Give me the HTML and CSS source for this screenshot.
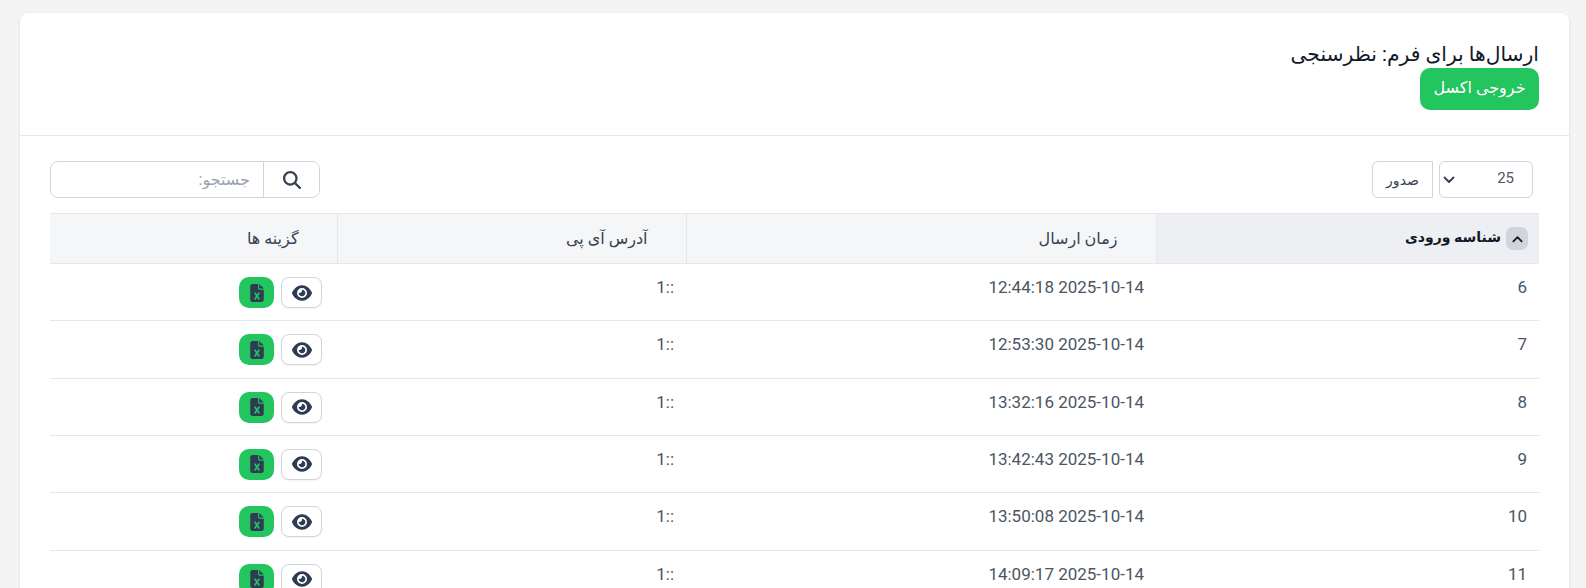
FILE: index.html
```html
<!DOCTYPE html>
<html lang="fa" dir="rtl">
<head>
<meta charset="utf-8">
<title>ارسال‌ها برای فرم: نظرسنجی</title>
<link rel="stylesheet" href="styles.css">
</head>
<body>
<main class="card">
  <header class="card-head">
    <h1 class="title">ارسال‌ها برای فرم: نظرسنجی</h1>
    <a class="btn-export">خروجی اکسل</a>
  </header>
  <section class="card-body">
    <div class="toolbar">
      <div class="tools">
        <div class="select"><span>25</span><svg class="chev" viewBox="0 0 12 8"><path d="M1.5 1.5 6 6l4.5-4.5" fill="none" stroke="#374151" stroke-width="1.9" stroke-linecap="round" stroke-linejoin="round"/></svg></div>
        <button class="btn-out">صدور</button>
      </div>
      <div class="search">
        <button class="search-btn"><svg class="search-ic" viewBox="0 0 512 512"><path fill="#374151" d="M416 208c0 45.9-14.9 88.3-40 122.7L502.6 457.4c12.5 12.5 12.5 32.8 0 45.3s-32.8 12.5-45.3 0L330.7 376c-34.4 25.2-76.8 40-122.7 40C93.1 416 0 322.9 0 208S93.1 0 208 0S416 93.1 416 208zM208 352a144 144 0 1 0 0-288 144 144 0 1 0 0 288z"/></svg></button>
        <input class="search-input" placeholder="جستجو:">
      </div>
    </div>
    <table class="grid">
      <colgroup><col class="c1"><col class="c2"><col class="c3"><col class="c4"></colgroup>
      <thead>
        <tr>
          <th class="sorted"><span class="sort"><svg viewBox="0 0 12 8"><path d="M1.5 6.5 6 2l4.5 4.5" fill="none" stroke="#111827" stroke-width="2" stroke-linecap="round" stroke-linejoin="round"/></svg></span>شناسه ورودی</th>
          <th>زمان ارسال</th>
          <th>آدرس آی پی</th>
          <th>گزینه ها</th>
        </tr>
      </thead>
      <tbody id="rows"></tbody>
    </table>
  </section>
</main>
<svg class="defs" aria-hidden="true">
  <symbol id="eye" viewBox="0 0 576 512"><path d="M288 32c-80.8 0-145.5 36.8-192.6 80.6C48.6 156 17.3 208 2.5 243.7c-3.3 7.9-3.3 16.7 0 24.6C17.3 304 48.6 356 95.4 399.4C142.5 443.2 207.2 480 288 480s145.5-36.8 192.6-80.6c46.8-43.5 78.1-95.4 93-131.1c3.3-7.9 3.3-16.7 0-24.6c-14.9-35.7-46.2-87.7-93-131.1C433.5 68.8 368.8 32 288 32zM144 256a144 144 0 1 1 288 0 144 144 0 1 1 -288 0zm144-64c0 35.3-28.7 64-64 64c-7.1 0-13.9-1.2-20.3-3.3c-5.5-1.8-11.9 1.6-11.7 7.4c.3 6.9 1.3 13.8 3.2 20.7c13.7 51.2 66.4 81.6 117.6 67.9s81.6-66.4 67.9-117.6c-11.1-41.5-47.8-69.4-88.6-71.1c-5.8-.2-9.2 6.1-7.4 11.7c2.1 6.4 3.3 13.2 3.3 20.3z"/></symbol>
  <symbol id="xls" viewBox="0 0 384 512"><path d="M64 0C28.7 0 0 28.7 0 64V448c0 35.3 28.7 64 64 64H320c35.3 0 64-28.7 64-64V160H256c-17.7 0-32-14.3-32-32V0H64zM256 0V128H384L256 0zM155.7 250.2L192 302.1l36.3-51.9c7.6-10.9 22.6-13.5 33.4-5.9s13.5 22.6 5.9 33.4L221.3 344l46.4 66.2c7.6 10.9 5 25.8-5.9 33.4s-25.8 5-33.4-5.9L192 385.8l-36.3 51.9c-7.6 10.9-22.6 13.5-33.4 5.9s-13.5-22.6-5.9-33.4L162.7 344l-46.4-66.2c-7.6-10.9-5-25.8 5.9-33.4s25.8-5 33.4 5.9z"/></symbol>
</svg>
<script src="app.js"></script>
</body>
</html>
```
FILE: styles.css
```css
* { box-sizing: border-box; }
html, body { margin: 0; height: 100%; overflow: hidden; }
body {
  background: #f4f4f4;
  padding: 13px 17px 0 20px;
  font-family: Roboto, "DejaVu Sans", sans-serif;
  color: #374151;
  font-size: 17px;
}
.defs { display: none; }
.card {
  background: #fff;
  border-radius: 8px;
  box-shadow: 0 1px 3px rgba(0,0,0,.12);
  width: 1549px;
}
.card-head {
  height: 123px;
  padding: 28px 30px 0;
  border-bottom: 1px solid #e5e7eb;
}
.title { margin: 0; font-size: 20.3px; font-weight: 400; line-height: 27px; color: #111827; }
.btn-export {
  display: inline-flex; align-items: center; justify-content: center;
  width: 119px; height: 42px;
  background: #22c55e; color: #fff;
  border-radius: 10px; font-size: 16px;
  padding-bottom: 3px;
}
.card-body { padding: 25px 30px 0; }
.toolbar { display: flex; justify-content: space-between; align-items: center; padding-right: 6px; }
.tools { display: flex; gap: 6px; }
.select {
  width: 94px; height: 37px;
  border: 1px solid #d1d5db; border-radius: 6px;
  display: flex; align-items: center; justify-content: space-between;
  padding: 0 18px 3px 3px; font-size: 15px; color: #4b5563;
}
.chev { width: 12px; height: 8px; margin-top: 3px; }
.btn-out {
  width: 61px; height: 37px; padding: 0;
  background: #fff; border: 1px solid #d1d5db;
  border-radius: 6px 0 0 6px;
  font: inherit; font-size: 14px; color: #374151;
}
.search {
  width: 270px; height: 37px;
  border: 1px solid #d1d5db; border-radius: 8px;
  display: flex; overflow: hidden;
}
.search-input {
  flex: 1; min-width: 0; border: 0; outline: 0; padding: 0 13px;
  font: inherit; font-size: 16px; background: transparent; direction: rtl;
}
.search-input::placeholder { color: #9ca3af; opacity: 1; }
.search-btn {
  width: 56px; border: 0; border-left: 1px solid #d1d5db; background: #fff; padding: 0;
  display: flex; align-items: center; justify-content: center;
}
.search-ic { width: 18px; height: 18px; }
.grid { margin-top: 15px; width: 1489px; border-collapse: collapse; table-layout: fixed; }
.c1 { width: 383px; } .c2 { width: 470px; } .c3 { width: 349px; } .c4 { width: 287px; }
.grid th {
  height: 50px; padding: 0 38px 0 12px; text-align: right;
  background: #f5f6f8; font-weight: 400; font-size: 16px; color: #374151;
  border-top: 1px solid #e5e7eb; border-bottom: 1px solid #e5e7eb; border-left: 1px solid #e5e7eb;
}
.grid th:last-child { border-left: 0; }
.grid th.sorted { background: #eeeff2; font-weight: 700; font-size: 14px; color: #111827; padding-right: 11px; }
.sort {
  display: inline-flex; align-items: center; justify-content: center;
  width: 22px; height: 23px; margin-left: 5px; vertical-align: middle;
  background: #d1d5db; border-radius: 7px;
}
.sort svg { width: 11px; height: 8px; }
.grid td {
  height: 57.33px; padding: 11px 12px 0; vertical-align: top;
  border-bottom: 1px solid #e5e7eb; line-height: 24px; color: #4b5563;
}
.actions { display: flex; gap: 7px; margin-top: 2px; padding-right: 3px; }
.btn-eye, .btn-xls {
  height: 31px; padding: 0; display: flex; align-items: center; justify-content: center;
}
.btn-eye { width: 41px; background: #fff; border: 1px solid #d1d5db; border-radius: 8px; box-shadow: 0 1px 2px rgba(0,0,0,.05); }
.btn-xls { width: 35px; background: #22c55e; border: 0; border-radius: 10px; }
.btn-eye svg { width: 20px; height: 18px; fill: #2f3b52; }
.btn-xls svg { width: 14px; height: 18px; fill: #2f3b52; }
```
FILE: app.js
```js
var data = [
  ["6", "2025-10-14 12:44:18"], ["7", "2025-10-14 12:53:30"], ["8", "2025-10-14 13:32:16"],
  ["9", "2025-10-14 13:42:43"], ["10", "2025-10-14 13:50:08"], ["11", "2025-10-14 14:09:17"]
];
document.getElementById("rows").innerHTML = data.map(function (r) {
  return '<tr><td>' + r[0] + '</td><td>' + r[1] + '</td><td>::1</td><td><div class="actions">' +
    '<button class="btn-eye"><svg><use href="#eye"/></svg></button>' +
    '<button class="btn-xls"><svg><use href="#xls"/></svg></button></div></td></tr>';
}).join("");
```
